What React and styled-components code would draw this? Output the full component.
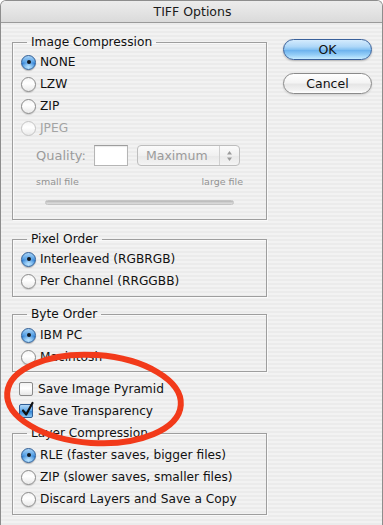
import React from "react";
import styled, { createGlobalStyle, css } from "styled-components";

const GlobalStyle = createGlobalStyle`
  html, body { margin: 0; padding: 0; background: #ffffff; }
  * { box-sizing: border-box; }
`;

const FONT = `"DejaVu Sans", "Liberation Sans", sans-serif`;

const Window = styled.div`
  position: relative;
  width: 383px;
  height: 525px;
  border: 1px solid #8d8d8d;
  border-bottom: none;
  border-radius: 6px 6px 0 0;
  overflow: hidden;
  font-family: ${FONT};
  font-size: 12px;
  color: #111;
  background: repeating-linear-gradient(
    to bottom,
    #f2f2f2 0px,
    #f2f2f2 2px,
    #ebebeb 2px,
    #ebebeb 4px
  );
`;

const TitleBar = styled.div`
  height: 22px;
  border-bottom: 1px solid #9a9a9a;
  background: linear-gradient(to bottom, #ececec 0%, #e2e2e2 60%, #dadada 100%);
  display: flex;
  align-items: center;
  justify-content: center;
  font-size: 12.5px;
  color: #1a1a1a;
  padding-left: 2px;
`;

const Body = styled.div`
  display: flex;
  padding: 11px 0 0 11px;
  gap: 16px;
`;

const LeftColumn = styled.div`
  width: 255px;
  display: flex;
  flex-direction: column;
`;

const RightColumn = styled.div`
  padding-top: 5px;
  display: flex;
  flex-direction: column;
  gap: 13px;
`;

const Group = styled.fieldset`
  margin: ${(p) => p.$mt || 0}px 0 0 0;
  padding: ${(p) => p.$pt ?? 1}px 8px ${(p) => p.$pb ?? 3}px 8px;
  border: 1px solid #9e9e9e;
  box-shadow: inset 1px 1px 0 rgba(255, 255, 255, 0.7), 1px 1px 0 rgba(255, 255, 255, 0.7);
  min-width: 0;
`;

const Legend = styled.legend`
  margin-left: 6px;
  padding: 0 4px;
  line-height: 16px;
  height: 16px;
  font-size: 12.2px;
  color: #111;
`;

const Row = styled.label`
  display: flex;
  align-items: center;
  height: ${(p) => p.$h || 22}px;
  gap: 4px;
  color: ${(p) => (p.$disabled ? "#a3a3a3" : "#111")};
  font-size: 12.2px;
  white-space: nowrap;
`;

const CheckRow = styled(Row)`
  padding-left: 7px;
  gap: 5px;
`;

const RadioDot = styled.span`
  position: relative;
  flex: none;
  width: 15px;
  height: 15px;
  border-radius: 50%;
  ${(p) =>
    p.$checked
      ? css`
          border: 1px solid #2f5d95;
          background: radial-gradient(circle at 50% 85%, #b9e3ff 0%, rgba(185, 227, 255, 0) 55%),
            linear-gradient(to bottom, #a7d2f6 0%, #5aa3e6 45%, #2f7fd4 55%, #6fb5ee 100%);
          box-shadow: 0 1px 1px rgba(0, 0, 0, 0.25);
          &::after {
            content: "";
            position: absolute;
            left: 4.5px;
            top: 4.5px;
            width: 4px;
            height: 4px;
            border-radius: 50%;
            background: #121820;
          }
        `
      : css`
          border: 1px solid ${p.$disabled ? "#c4c4c4" : "#8a8a8a"};
          background: linear-gradient(to bottom, #f4f4f4 0%, #ffffff 40%, #e9e9e9 100%);
          box-shadow: ${p.$disabled ? "none" : "0 1px 1px rgba(0, 0, 0, 0.15)"};
        `}
`;

const CheckBox = styled.span`
  position: relative;
  flex: none;
  width: 14px;
  height: 14px;
  border-radius: 2px;
  ${(p) =>
    p.$checked
      ? css`
          border: 1px solid #2f5d95;
          background: linear-gradient(to bottom, #b3d9f8 0%, #5ea7e8 48%, #3585d6 55%, #8ccaf4 100%);
        `
      : css`
          border: 1px solid #8a8a8a;
          background: linear-gradient(to bottom, #f2f2f2 0%, #ffffff 45%, #e8e8e8 100%);
        `}
  svg {
    position: absolute;
    left: 1px;
    top: -4px;
  }
`;

const QualityRow = styled.div`
  display: flex;
  align-items: center;
  height: 21px;
  margin-top: 6px;
  padding-left: 15px;
  color: #9b9b9b;
  font-size: 13px;
`;

const QualityLabel = styled.span`
  width: 58px;
`;

const TextBox = styled.span`
  width: 34px;
  height: 21px;
  background: #fff;
  border: 1px solid #b5b5b5;
  border-top-color: #9d9d9d;
  box-shadow: inset 0 1px 1px rgba(0, 0, 0, 0.08);
`;

const Select = styled.span`
  margin-left: 9px;
  width: 103px;
  height: 21px;
  border: 1px solid #bdbdbd;
  border-radius: 4px;
  background: linear-gradient(to bottom, #fbfbfb 0%, #f0f0f0 50%, #e8e8e8 51%, #f4f4f4 100%);
  display: flex;
  align-items: center;
  color: #9b9b9b;
`;

const SelectText = styled.span`
  flex: 1;
  padding-left: 8px;
  font-size: 12.5px;
`;

const SelectArrows = styled.span`
  width: 20px;
  height: 100%;
  border-left: 1px solid #d0d0d0;
  display: flex;
  align-items: center;
  justify-content: center;
`;

const ScaleLabels = styled.div`
  display: flex;
  justify-content: space-between;
  width: 207px;
  margin: 10px 0 0 15px;
  height: 12px;
  line-height: 12px;
  font-size: 9.5px;
  color: #939393;
`;

const SliderTrack = styled.div`
  margin: 12px 0 0 24px;
  width: 189px;
  height: 5px;
  border-radius: 3px;
  background: linear-gradient(to bottom, #b5b5b5 0%, #cfcfcf 50%, #dcdcdc 100%);
  border: 1px solid #c4c4c4;
`;

const CheckGroup = styled.div`
  margin-top: 6px;
  display: flex;
  flex-direction: column;
`;

const Button = styled.button`
  width: 89px;
  height: 21px;
  border-radius: 11px;
  font-family: ${FONT};
  font-size: 12.5px;
  color: #111;
  padding: 0;
  display: flex;
  align-items: center;
  justify-content: center;
  ${(p) =>
    p.$default
      ? css`
          border: 1px solid #39609a;
          background: linear-gradient(
            to bottom,
            #d4ebfd 0%,
            #aed7f8 35%,
            #86c2f2 50%,
            #6eb3ee 55%,
            #98d0f8 80%,
            #c8ecff 100%
          );
          box-shadow: 0 1px 2px rgba(0, 0, 0, 0.25);
        `
      : css`
          border: 1px solid #8a8a8a;
          background: linear-gradient(
            to bottom,
            #ffffff 0%,
            #f4f4f4 45%,
            #e6e6e6 55%,
            #f2f2f2 85%,
            #ffffff 100%
          );
          box-shadow: 0 1px 2px rgba(0, 0, 0, 0.15);
        `}
`;

const Annotation = styled.svg`
  position: absolute;
  left: 0;
  top: 0;
  pointer-events: none;
`;

function Radio({ label, checked, disabled }) {
  return (
    <Row $disabled={disabled}>
      <RadioDot $checked={checked} $disabled={disabled} />
      <span>{label}</span>
    </Row>
  );
}

function Check({ label, checked }) {
  return (
    <CheckRow>
      <CheckBox $checked={checked}>
        {checked && (
          <svg width="14" height="16" viewBox="0 0 14 16">
            <path d="M2 9.5 L5.2 13.5 L11.5 2" fill="none" stroke="#111" strokeWidth="2.2" strokeLinecap="round" strokeLinejoin="round" />
          </svg>
        )}
      </CheckBox>
      <span>{label}</span>
    </CheckRow>
  );
}

export default function App() {
  return (
    <>
      <GlobalStyle />
      <Window>
        <TitleBar>TIFF Options</TitleBar>
        <Body>
          <LeftColumn>
            <Group $pt={1} $pb={14}>
              <Legend>Image Compression</Legend>
              <Radio label="NONE" checked />
              <Radio label="LZW" />
              <Radio label="ZIP" />
              <Radio label="JPEG" disabled />
              <QualityRow>
                <QualityLabel>Quality:</QualityLabel>
                <TextBox />
                <Select>
                  <SelectText>Maximum</SelectText>
                  <SelectArrows>
                    <svg width="7" height="12" viewBox="0 0 7 12">
                      <path d="M3.5 1 L6 4.5 H1 Z" fill="#9a9a9a" />
                      <path d="M3.5 11 L6 7.5 H1 Z" fill="#9a9a9a" />
                    </svg>
                  </SelectArrows>
                </Select>
              </QualityRow>
              <ScaleLabels>
                <span>small file</span>
                <span>large file</span>
              </ScaleLabels>
              <SliderTrack />
            </Group>

            <Group $mt={11} $pt={1} $pb={4}>
              <Legend>Pixel Order</Legend>
              <Radio label="Interleaved (RGBRGB)" checked />
              <Radio label="Per Channel (RRGGBB)" />
            </Group>

            <Group $mt={9} $pt={2} $pb={3}>
              <Legend>Byte Order</Legend>
              <Radio label="IBM PC" checked />
              <Radio label="Macintosh" />
            </Group>

            <CheckGroup>
              <Check label="Save Image Pyramid" />
              <Check label="Save Transparency" checked />
            </CheckGroup>

            <Group $mt={3} $pt={3} $pb={4}>
              <Legend>Layer Compression</Legend>
              <Radio label="RLE (faster saves, bigger files)" checked />
              <Radio label="ZIP (slower saves, smaller files)" />
              <Radio label="Discard Layers and Save a Copy" />
            </Group>
          </LeftColumn>

          <RightColumn>
            <Button $default>OK</Button>
            <Button>Cancel</Button>
          </RightColumn>
        </Body>

        <Annotation width="383" height="525" viewBox="0 0 383 525">
          <ellipse
            cx="93"
            cy="398"
            rx="87"
            ry="44"
            transform="rotate(4 93 398)"
            fill="none"
            stroke="#f23a1a"
            strokeWidth="6"
          />
        </Annotation>
      </Window>
    </>
  );
}
